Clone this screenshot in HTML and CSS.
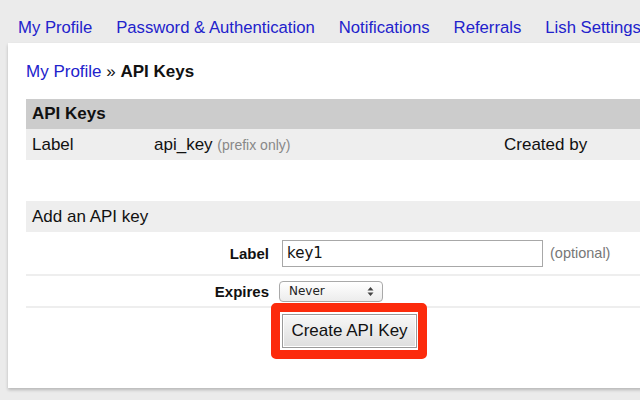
FILE: index.html
```html
<!DOCTYPE html>
<html>
<head>
<meta charset="utf-8">
<link rel="stylesheet" href="styles.css">
</head>
<body>
<nav class="tabs">
  <a href="#">My Profile</a>
  <a href="#">Password &amp; Authentication</a>
  <a href="#">Notifications</a>
  <a href="#">Referrals</a>
  <a href="#">Lish Settings</a>
</nav>
<main class="panel">
  <h1 class="crumb"><a href="#">My Profile</a> » <b>API Keys</b></h1>
  <div class="keys">
    <div class="keys-head">API Keys</div>
    <div class="keys-cols">
      <span class="c-label">Label</span>
      <span class="c-key">api_key <small>(prefix only)</small></span>
      <span class="c-by">Created by</span>
    </div>
  </div>
  <form class="add">
    <div class="add-head">Add an API key</div>
    <div class="row row-label">
      <label class="lbl">Label</label>
      <div class="fld"><input class="txt" type="text" value="key1"><span class="opt">(optional)</span></div>
    </div>
    <div class="row row-exp">
      <label class="lbl">Expires</label>
      <div class="fld">
        <span class="sel">Never
          <svg class="arr" width="7" height="11" viewBox="0 0 7 11"><path d="M3.5 1L6.5 4.5H0.5Z M3.5 10L6.5 6.5H0.5Z" fill="#444"/></svg>
        </span>
      </div>
    </div>
    <div class="row row-btn">
      <span class="lbl"></span>
      <div class="fld"><span class="hl"><button type="button" class="btn">Create API Key</button></span></div>
    </div>
  </form>
</main>
</body>
</html>
```
FILE: styles.css
```css
html, body { margin: 0; padding: 0; }
body {
  background: #ebebeb;
  font-family: "Liberation Sans", Arial, sans-serif;
  font-size: 17px;
  color: #111;
  overflow: hidden;
  width: 640px;
  height: 400px;
}
a { color: #2222cc; text-decoration: none; }
.tabs {
  display: flex;
  gap: 24px;
  height: 43px;
  align-items: center;
  padding-left: 18px;
  padding-top: 12px;
  box-sizing: border-box;
  white-space: nowrap;
  font-size: 16.7px;
}
.panel {
  margin-left: 8px;
  width: 700px;
  background: #fff;
  padding: 20px 0 29px 18px;
  box-shadow: 0 2px 3px rgba(0,0,0,0.22);
  height: 296px;
}
.crumb {
  margin: 0 0 18px 0;
  font-size: 17px;
  line-height: 18px;
  font-weight: normal;
}
.crumb b { font-weight: bold; }
.keys-head {
  background: #cccccc;
  height: 30px;
  line-height: 30px;
  padding-left: 6px;
  font-weight: bold;
}
.keys-cols {
  background: #eeeeee;
  height: 31px;
  display: flex;
  align-items: center;
  padding-left: 6px;
}
.c-label { width: 122px; }
.c-key { width: 350px; }
.c-key small { font-size: 14px; color: #888; }
.add { margin-top: 41px; }
.add-head {
  background: #eeeeee;
  height: 31px;
  line-height: 31px;
  padding-left: 6px;
}
.row {
  display: flex;
  align-items: center;
  border-bottom: 2px solid #eeeeee;
}
.row-label { height: 42px; }
.row-exp { height: 30px; }
.row-btn { border-bottom: none; padding-top: 6px; align-items: flex-start; }
.lbl {
  width: 243px;
  text-align: right;
  font-weight: bold;
  font-size: 15px;
  padding-right: 5px;
}
.fld { display: flex; align-items: center; }
.txt {
  margin-left: 8px;
  width: 261px;
  height: 27px;
  box-sizing: border-box;
  border: 1px solid #a8a8a8;
  padding: 0 4px;
  font-family: "DejaVu Sans", sans-serif;
  font-size: 15px;
  color: #111;
  outline: none;
}
.opt { margin-left: 7px; font-size: 14.5px; color: #777; }
.sel {
  position: relative;
  margin-left: 5px;
  margin-top: 1px;
  width: 104px;
  height: 21px;
  box-sizing: border-box;
  border: 1px solid #a9a9a9;
  border-radius: 4px;
  background: linear-gradient(#ffffff, #ececec);
  font-family: "DejaVu Sans", sans-serif;
  font-size: 12px;
  line-height: 19px;
  padding-left: 9px;
  color: #222;
}
.arr { position: absolute; right: 8px; top: 4px; }
.hl {
  position: relative;
  margin-left: 8px;
  display: inline-block;
}
.hl::before {
  content: "";
  position: absolute;
  left: -11px; right: -10px; top: -11px; bottom: -11px;
  border: 9px solid #fc2b0c;
  border-radius: 5px;
  pointer-events: none;
}
.btn {
  width: 135px;
  height: 34px;
  border: 1px solid #9a9a9a;
  box-shadow: inset 0 0 0 1px #fff;
  background: linear-gradient(#f8f8f8, #dedede);
  font-family: "Liberation Sans", Arial, sans-serif;
  font-size: 17px;
  color: #111;
  padding: 0;
}
```
